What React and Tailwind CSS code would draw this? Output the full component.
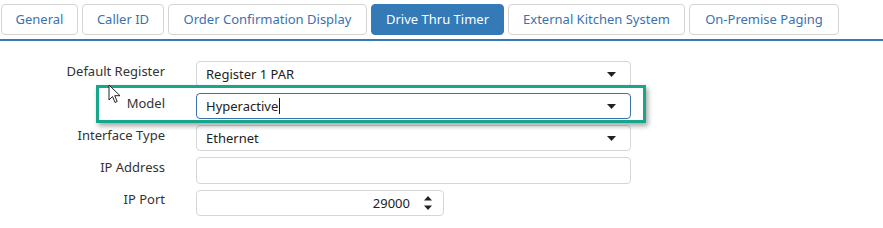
import { useState } from 'react';

const TABS = [
  { label: 'General', w: 'w-[77px]' },
  { label: 'Caller ID', w: 'w-[82px]' },
  { label: 'Order Confirmation Display', w: 'w-[199px]' },
  { label: 'Drive Thru Timer', w: 'w-[133px]' },
  { label: 'External Kitchen System', w: 'w-[177px]' },
  { label: 'On-Premise Paging', w: 'w-[150px]' },
];

function Caret() {
  return (
    <svg width="9" height="5" viewBox="0 0 9 5" className="shrink-0">
      <path d="M0 0h9L4.5 5z" fill="#222" />
    </svg>
  );
}

function SelectBox({ value, focused }) {
  return (
    <div
      className={
        'flex items-center justify-between w-[435px] h-[26px] rounded-[4px] bg-white pl-[9px] pr-[14px] border ' +
        (focused ? 'border-[#3a6fb0]' : 'border-[#d6d6d6]')
      }
    >
      <span className="text-[13px] text-[#222] leading-none flex items-center">
        {value}
        {focused ? <span className="inline-block w-px h-[16px] bg-[#111] ml-px" /> : null}
      </span>
      <Caret />
    </div>
  );
}

function Row({ label, children }) {
  return (
    <div className="flex items-start h-[26px]">
      <div className="w-[165px] text-right text-[13px] text-[#333] pt-[1px] leading-[18px]">{label}</div>
      <div className="ml-[31px]">{children}</div>
    </div>
  );
}

export default function App() {
  const [tab] = useState('Drive Thru Timer');

  return (
    <div className="w-[883px] h-[228px] bg-white overflow-hidden" style={{ fontFamily: '"Noto Sans", "Open Sans", sans-serif' }}>
      <div className="flex gap-[4px] pl-px pt-[4px]">
        {TABS.map((t) => (
          <div
            key={t.label}
            className={
              t.w +
              ' h-[31px] flex items-center justify-center rounded-[4px] border text-[13px] ' +
              (t.label === tab
                ? 'bg-[#337ab7] border-[#337ab7] text-white'
                : 'bg-white border-[#d4d4d4] text-[#3a72b0]')
            }
          >
            {t.label}
          </div>
        ))}
      </div>
      <div className="mt-[4px] h-[2px] bg-[#337ab7]" />

      <div className="relative pt-[20px] flex flex-col gap-[6px]">
        <Row label="Default Register">
          <SelectBox value="Register 1 PAR" />
        </Row>
        <Row label="Model">
          <SelectBox value="Hyperactive" focused />
        </Row>
        <Row label="Interface Type">
          <SelectBox value="Ethernet" />
        </Row>
        <Row label="IP Address">
          <div className="w-[435px] h-[27px] rounded-[4px] border border-[#d6d6d6] bg-white" />
        </Row>
        <Row label="IP Port">
          <div className="flex items-center justify-end w-[248px] h-[26px] mt-px rounded-[4px] border border-[#d6d6d6] bg-white pr-[11px]">
            <span className="text-[13px] text-[#222] leading-none mr-[14px]">29000</span>
            <svg width="8" height="16" viewBox="0 0 8 16">
              <path d="M0 5.5L4 1l4 4.5z" fill="#222" />
              <path d="M0 10.5h8L4 15z" fill="#222" />
            </svg>
          </div>
        </Row>

        {/* highlight annotation around the Model row */}
        <div className="absolute left-[96px] top-[44px] w-[550px] h-[38px] border-[3px] border-[#17a689] shadow-[2px_3px_5px_rgba(0,0,0,0.35)] pointer-events-none" />

        {/* mouse pointer */}
        <svg className="absolute left-[108px] top-[43px]" width="14" height="20" viewBox="0 0 14 20">
          <path d="M1 1v15l3.5-3.5 2.5 6 2.2-1-2.5-5.8H12z" fill="#fff" stroke="#222" strokeWidth="1" strokeLinejoin="round" />
        </svg>
      </div>
    </div>
  );
}
